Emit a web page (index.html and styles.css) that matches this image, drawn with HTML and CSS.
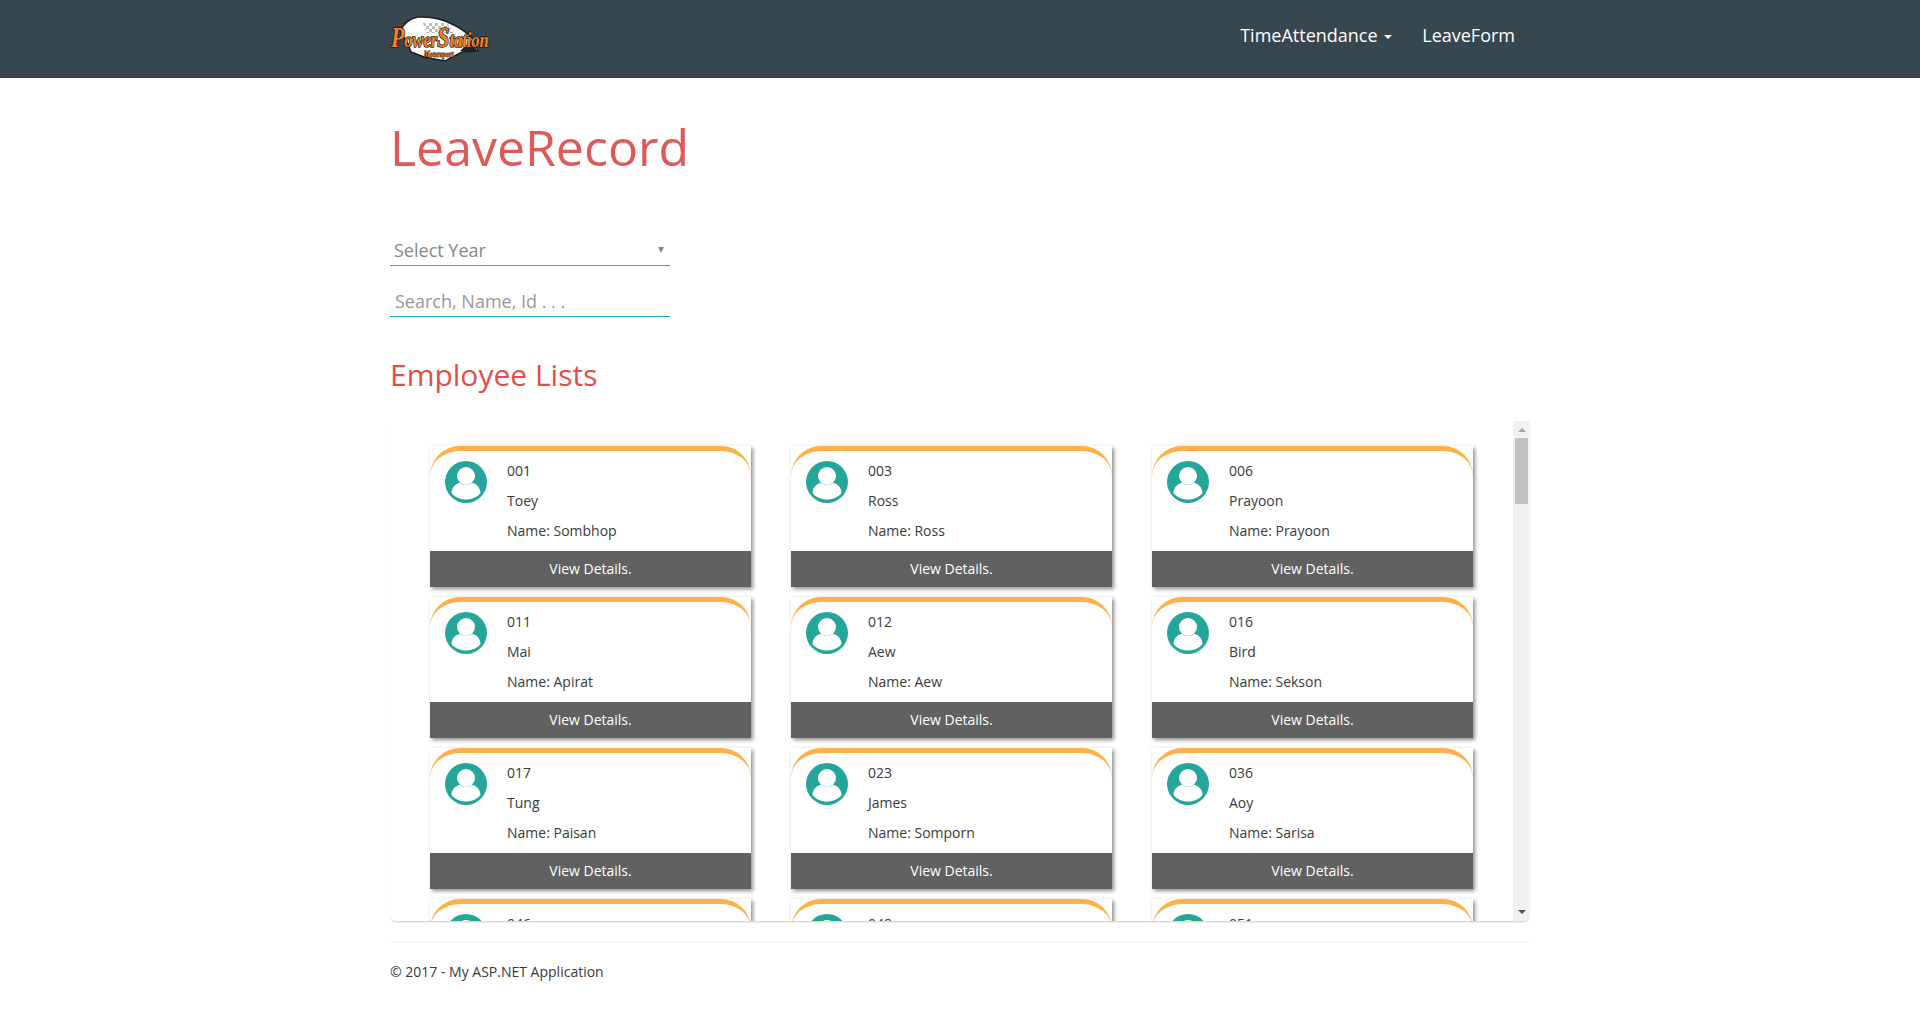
FILE: index.html
```html
<!DOCTYPE html>
<html lang="en">

<head>
  <meta charset="UTF-8">
  <title>LeaveRecord</title>
  <link rel="stylesheet" href="styles.css">
</head>

<body>
  <svg class="defs" width="0" height="0">
    <symbol id="avatar" viewBox="0 0 42 42">
      <circle cx="21" cy="21" r="21" fill="#26a69a" />
      <circle cx="21" cy="15" r="9" fill="#fff" />
      <path d="M6.500 32c0-5 4-9.500 8.500-10 3.500 2.500 8.500 2.500 12 0 4.500.5 8.500 5 8.500 10-3 4-8.500 6.500-14.500 6.500s-11.500-2.500-14.500-6.500z" fill="#fff" />
    </symbol>
    <pattern id="checker" width="6" height="6" patternUnits="userSpaceOnUse">
      <rect width="3" height="3" fill="#bdbdbd" />
      <rect x="3" y="3" width="3" height="3" fill="#bdbdbd" />
    </pattern>
  </svg>

  <nav class="navbar">
    <div class="container navbar-inner">
      <a class="brand" href="#">
        <svg width="100" height="48" viewBox="0 0 100 48">
          <path d="M10 17 Q16 5 28 3 Q48 2 64 11 Q76 17 84 26 L88 37 L72 38 L55 47 L34 43 L21 38 L18 30z" fill="#fff" stroke="#1c1c1c" stroke-width="1.500" />
          <path d="M33 9h24l8 10H36z" fill="url(#checker)" />
          <path d="M70 37l12-11 5 11z" fill="#222" />
          <text class="brand-text" transform="translate(1 33) scale(.75 1)">
            <tspan class="brand-big">P</tspan>ower<tspan class="brand-big">S</tspan>tation
          </text>
          <text class="brand-sub" transform="translate(34 43) scale(.8 1)">Motorsport</text>
        </svg>
      </a>
      <ul class="nav">
        <li><a href="#">TimeAttendance <span class="caret"></span></a></li>
        <li><a href="#">LeaveForm</a></li>
      </ul>
    </div>
  </nav>

  <main class="container">
    <h1>LeaveRecord</h1>

    <div class="filters">
      <div class="field select-field">Select Year <span class="select-arrow"></span></div>
      <input class="field search-field" type="text" placeholder="Search, Name, Id . . .">
    </div>

    <h2>Employee Lists</h2>

    <div class="panel">
      <div class="card-list">
        <div class="card">
          <div class="card-body">
            <svg class="avatar"><use href="#avatar" /></svg>
            <div class="info">
              <p>001</p>
              <p>Toey</p>
              <p>Name: Sombhop</p>
            </div>
          </div>
          <a class="card-link" href="#">View Details.</a>
        </div>
        <div class="card">
          <div class="card-body">
            <svg class="avatar"><use href="#avatar" /></svg>
            <div class="info">
              <p>003</p>
              <p>Ross</p>
              <p>Name: Ross</p>
            </div>
          </div>
          <a class="card-link" href="#">View Details.</a>
        </div>
        <div class="card">
          <div class="card-body">
            <svg class="avatar"><use href="#avatar" /></svg>
            <div class="info">
              <p>006</p>
              <p>Prayoon</p>
              <p>Name: Prayoon</p>
            </div>
          </div>
          <a class="card-link" href="#">View Details.</a>
        </div>
        <div class="card">
          <div class="card-body">
            <svg class="avatar"><use href="#avatar" /></svg>
            <div class="info">
              <p>011</p>
              <p>Mai</p>
              <p>Name: Apirat</p>
            </div>
          </div>
          <a class="card-link" href="#">View Details.</a>
        </div>
        <div class="card">
          <div class="card-body">
            <svg class="avatar"><use href="#avatar" /></svg>
            <div class="info">
              <p>012</p>
              <p>Aew</p>
              <p>Name: Aew</p>
            </div>
          </div>
          <a class="card-link" href="#">View Details.</a>
        </div>
        <div class="card">
          <div class="card-body">
            <svg class="avatar"><use href="#avatar" /></svg>
            <div class="info">
              <p>016</p>
              <p>Bird</p>
              <p>Name: Sekson</p>
            </div>
          </div>
          <a class="card-link" href="#">View Details.</a>
        </div>
        <div class="card">
          <div class="card-body">
            <svg class="avatar"><use href="#avatar" /></svg>
            <div class="info">
              <p>017</p>
              <p>Tung</p>
              <p>Name: Paisan</p>
            </div>
          </div>
          <a class="card-link" href="#">View Details.</a>
        </div>
        <div class="card">
          <div class="card-body">
            <svg class="avatar"><use href="#avatar" /></svg>
            <div class="info">
              <p>023</p>
              <p>James</p>
              <p>Name: Somporn</p>
            </div>
          </div>
          <a class="card-link" href="#">View Details.</a>
        </div>
        <div class="card">
          <div class="card-body">
            <svg class="avatar"><use href="#avatar" /></svg>
            <div class="info">
              <p>036</p>
              <p>Aoy</p>
              <p>Name: Sarisa</p>
            </div>
          </div>
          <a class="card-link" href="#">View Details.</a>
        </div>
        <div class="card">
          <div class="card-body">
            <svg class="avatar"><use href="#avatar" /></svg>
            <div class="info">
              <p>046</p>
            </div>
          </div>
        </div>
        <div class="card">
          <div class="card-body">
            <svg class="avatar"><use href="#avatar" /></svg>
            <div class="info">
              <p>048</p>
            </div>
          </div>
        </div>
        <div class="card">
          <div class="card-body">
            <svg class="avatar"><use href="#avatar" /></svg>
            <div class="info">
              <p>051</p>
            </div>
          </div>
        </div>
      </div>
      <div class="scrollbar">
        <span class="arrow-up"></span>
        <div class="thumb"></div>
        <span class="arrow-down"></span>
      </div>
    </div>

    <hr>
    <footer>© 2017 - My ASP.NET Application</footer>
  </main>
</body>

</html>
```
FILE: styles.css
```css
* {
  box-sizing: border-box;
}

body {
  margin: 0;
  font-family: "Open Sans", sans-serif;
  font-size: 14px;
  line-height: 20px;
  color: #3a3a3a;
  background: #fff;
}

.defs {
  display: block;
  height: 0;
}

a {
  text-decoration: none;
}

.container {
  width: 1170px;
  margin: 0 auto;
  padding: 0 15px;
}

.navbar {
  height: 78px;
  background: #37474f;
}

.navbar-inner {
  display: flex;
  justify-content: space-between;
}

.brand {
  display: block;
  padding-top: 14px;
}

.brand-text {
  font-family: "Liberation Serif", serif;
  font-style: italic;
  font-weight: bold;
  font-size: 22px;
  fill: #f58220;
  stroke: #141414;
  stroke-width: 1.600px;
  paint-order: stroke;
}

.brand-big {
  font-size: 29px;
}

.brand-sub {
  font-family: "Liberation Serif", serif;
  font-style: italic;
  font-weight: bold;
  font-size: 8px;
  fill: #e87a1d;
  stroke: #141414;
  stroke-width: .8px;
  paint-order: stroke;
}

.nav {
  display: flex;
  list-style: none;
  margin: 0;
  padding: 0;
}

.nav a {
  display: block;
  padding: 22px 15px 0;
  font-size: 18px;
  line-height: 26px;
  color: #fff;
}

.caret {
  display: inline-block;
  width: 0;
  height: 0;
  margin-left: 2px;
  vertical-align: middle;
  border-top: 4px solid #fff;
  border-left: 4px solid transparent;
  border-right: 4px solid transparent;
}

h1 {
  margin: 0;
  padding-top: 40px;
  font-size: 50px;
  line-height: 58px;
  font-weight: 400;
  color: #df5a56;
}

.filters {
  width: 280px;
  margin-top: 57px;
}

.field {
  display: block;
  width: 100%;
  height: 33px;
  border: 0;
  border-bottom: 1px solid #1ea9d9;
  font-family: inherit;
  font-size: 18px;
  color: #888;
  background: transparent;
  outline: 0;
}

.select-field {
  position: relative;
  padding: 4px 4px 0;
  line-height: 26px;
}

.select-arrow {
  position: absolute;
  right: 6px;
  top: 14px;
  width: 0;
  height: 0;
  border-top: 6px solid #888;
  border-left: 3px solid transparent;
  border-right: 3px solid transparent;
}

.search-field {
  margin-top: 18px;
  padding: 1px 5px 0;
}

.search-field::placeholder {
  color: #999;
  opacity: 1;
}

h2 {
  margin: 40px 0 0;
  font-size: 30px;
  line-height: 36px;
  font-weight: 400;
  color: #e04f48;
}

.panel {
  display: flex;
  height: 500px;
  margin-top: 28px;
  overflow: hidden;
  border-radius: 0 0 6px 6px;
  box-shadow: 0 2px 2px -1px rgba(90, 80, 60, .3);
}

.card-list {
  flex: 1;
  display: grid;
  grid-template-columns: repeat(3, 321px);
  grid-auto-rows: 141px;
  gap: 10px 40px;
  align-content: start;
  padding: 25px 0 0 40px;
  overflow: hidden;
}

.card {
  display: flex;
  flex-direction: column;
  background: #fff;
  box-shadow: 2px 2px 4px rgba(0, 0, 0, .45);
}

.card-body {
  flex: 1;
  display: flex;
  padding: 10px 15px 0;
  border-top: 5px solid #ffb048;
  border-radius: 30px 30px 0 0;
}

.avatar {
  flex: none;
  width: 42px;
  height: 42px;
}

.info {
  margin-left: 20px;
}

.info p {
  margin: 0 0 10px;
  font-size: 14px;
  line-height: 20px;
}

.card-link {
  display: block;
  height: 36px;
  font-size: 14px;
  line-height: 36px;
  text-align: center;
  color: #fff;
  background: #616161;
}

.scrollbar {
  flex: none;
  width: 17px;
  display: flex;
  flex-direction: column;
  align-items: center;
  background: #f1f1f1;
}

.arrow-up,
.arrow-down {
  flex: none;
  width: 0;
  height: 0;
  border-left: 4px solid transparent;
  border-right: 4px solid transparent;
}

.arrow-up {
  margin-top: 7px;
  border-bottom: 4px solid #a3a3a3;
}

.thumb {
  width: 13px;
  height: 66px;
  margin-top: 6px;
  background: #c1c1c1;
}

.arrow-down {
  margin-top: auto;
  margin-bottom: 7px;
  border-top: 4px solid #505050;
}

hr {
  margin: 20px 0 0;
  border: 0;
  border-top: 1px solid #eee;
}

footer {
  padding-top: 20px;
  font-size: 14px;
  line-height: 20px;
}
```
